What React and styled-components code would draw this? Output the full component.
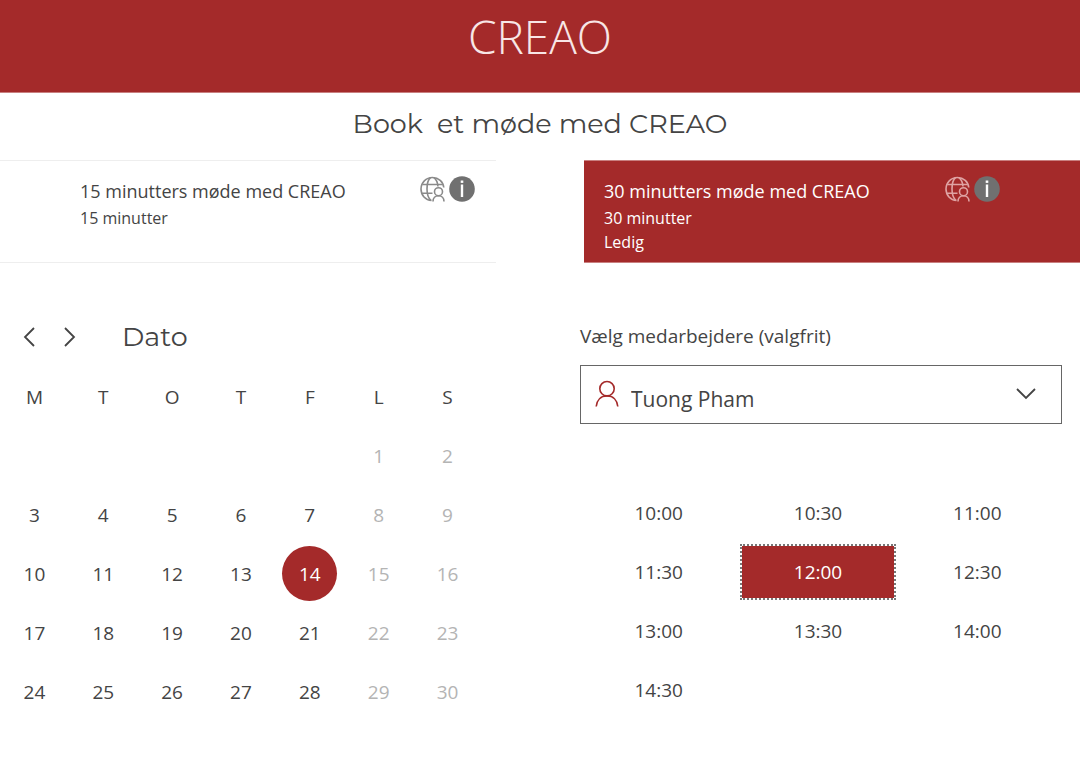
import { useState } from "react"
import styled, { createGlobalStyle } from "styled-components"

const GlobalStyle = createGlobalStyle`
  * {
    box-sizing: border-box;
  }

  body {
    margin: 0;
    background-color: white;
    color: #444;
    font-family: "Segoe UI", "Open Sans", "Noto Sans", sans-serif;
  }

  button, select {
    font-family: inherit;
    color: inherit;
  }
`

const Header = styled.header`
  height: 93px;
  background-color: #a42a2a;
  border-bottom: 1px solid #c98080;
  text-align: center;
`

const Brand = styled.h1`
  margin: 0;
  font-size: 46px;
  font-weight: 300;
  line-height: 72px;
  color: #f8e6e6;
`

const PageTitle = styled.h2`
  margin: 0;
  font-family: Montserrat, Inter, sans-serif;
  font-size: 27px;
  font-weight: 400;
  line-height: 62px;
  padding-bottom: 5px;
  text-align: center;
  white-space: pre-wrap;
`

const Services = styled.section`
  display: grid;
  grid-template-columns: 1fr 1fr;
  gap: 88px;
`

const ServiceCard = styled.button`
  display: flex;
  justify-content: space-between;
  align-items: flex-start;
  min-height: 102px;
  padding: ${props => props.$selected ? '15px 80px 8px 20px' : '15px 21px 8px 80px'};
  background-color: ${props => props.$selected ? '#a42a2a' : 'white'};
  color: ${props => props.$selected ? 'white' : '#444'};
  border: 0;
  border-top: 1px solid ${props => props.$selected ? '#c98080' : '#eee'};
  border-bottom: 1px solid ${props => props.$selected ? '#c98080' : '#eee'};
  text-align: left;
  cursor: pointer;
`

const ServiceText = styled.span`
  display: flex;
  flex-direction: column;
`

const ServiceName = styled.span`
  font-size: 18px;
  line-height: 30px;
`

const ServiceDetail = styled.span`
  font-size: 16px;
  line-height: 24px;
`

const ServiceIcons = styled.span`
  display: flex;
  gap: 4px;
  color: ${props => props.$selected ? '#dfa3a3' : '#8a8a8a'};
`

const Booking = styled.main`
  display: grid;
  grid-template-columns: 1fr 1fr;
  gap: 98px;
  padding: 44px 18px 48px 0;
`

const CalendarHeader = styled.div`
  display: flex;
  align-items: center;
  height: 60px;
  padding-left: 16px;
`

const ArrowButton = styled.button`
  display: flex;
  justify-content: center;
  width: 28px;
  margin-right: 12px;
  padding: 0;
  background: none;
  border: 0;
  cursor: pointer;
`

const CalendarTitle = styled.h3`
  margin: 0 0 0 26px;
  font-family: Montserrat, Inter, sans-serif;
  font-size: 27px;
  font-weight: 400;
  line-height: 62px;
`

const CalendarTable = styled.table`
  width: 100%;
  table-layout: fixed;
  border-collapse: collapse;

  th, td {
    height: 59px;
    padding: 0;
    font-size: 19px;
    font-weight: 400;
    text-align: center;
  }
`

const DayButton = styled.button`
  width: 55px;
  height: 55px;
  padding: 0;
  border: 0;
  border-radius: 50%;
  background-color: ${props => props.$selected ? '#a42a2a' : 'transparent'};
  color: ${props => props.$selected ? 'white' : '#444'};
  font-size: 19px;
  cursor: pointer;

  &:disabled {
    color: #b4b4b4;
    cursor: default;
  }
`

const StaffLabel = styled.label`
  display: block;
  font-size: 19px;
  line-height: 58px;
`

const StaffField = styled.div`
  position: relative;
  margin-bottom: 61px;
`

const StaffSelect = styled.select`
  display: block;
  width: 100%;
  height: 59px;
  padding: 8px 50px 0 50px;
  appearance: none;
  background-color: white;
  border: 1px solid #666;
  border-radius: 0;
  font-size: 21px;
`

const StaffIcon = styled.span`
  position: absolute;
  top: 15px;
  left: 15px;
  line-height: 0;
  pointer-events: none;
`

const SelectArrow = styled.span`
  position: absolute;
  top: 22px;
  right: 26px;
  line-height: 0;
  pointer-events: none;
`

const TimeGrid = styled.div`
  display: grid;
  grid-template-columns: repeat(3, 1fr);
  gap: 3px 4px;
  padding: 0 7px 0 1px;
`

const TimeButton = styled.button`
  height: 56px;
  padding: 0;
  background-color: ${props => props.$selected ? '#a42a2a' : 'transparent'};
  background-clip: padding-box;
  border: 2px dotted ${props => props.$selected ? '#777' : 'transparent'};
  color: ${props => props.$selected ? 'white' : '#444'};
  font-size: 19px;
  cursor: pointer;
`

function GlobePersonIcon() {
  return (
    <svg width="25" height="26" viewBox="0 0 25 26" fill="none" stroke="currentColor" strokeWidth="1.6">
      <path d="M23.800 11.500C23.300 5.600 18.500 1.500 12.500 1.500C6 1.500 1 6.600 1 13C1 19.300 5.500 24.300 11.500 24.500" />
      <path d="M10.500 1.700C8 3.800 7 8 7 13C7 18.200 8.600 22.400 11 24.500" />
      <path d="M14 1.700C16.300 3.500 17.600 6.500 18 10.500" />
      <path d="M2.500 8.500H22.800M2 17.200H12.500" />
      <circle cx="18.500" cy="15.700" r="4" />
      <path d="M13 25.500C13 22 15.300 19.700 18.500 19.700C21.700 19.700 24 22 24 25.500" />
    </svg>
  )
}

function InfoIcon() {
  return (
    <svg width="26" height="26" viewBox="0 0 26 26">
      <circle cx="13" cy="13" r="12.800" fill="#707070" />
      <rect x="11.800" y="8.500" width="2.400" height="12.500" fill="white" />
      <rect x="11.700" y="4.500" width="2.600" height="2.400" fill="white" />
    </svg>
  )
}

function PersonIcon() {
  return (
    <svg width="24" height="27" viewBox="0 0 24 27" fill="none" stroke="#a42a2a" strokeWidth="1.6">
      <circle cx="12" cy="8.700" r="7.200" />
      <path d="M1.200 26.500C1.800 20 6 15.900 12 15.900C18 15.900 22.200 20 22.800 26.500" />
    </svg>
  )
}

function Chevron({ width, height, d }) {
  return (
    <svg width={width} height={height} viewBox={`0 0 ${width} ${height}`} fill="none" stroke="#444" strokeWidth="1.8">
      <path d={d} />
    </svg>
  )
}

const services = [
  { name: '15 minutters møde med CREAO', details: ['15 minutter'] },
  { name: '30 minutters møde med CREAO', details: ['30 minutter', 'Ledig'] },
]

const weekdays = ['M', 'T', 'O', 'T', 'F', 'L', 'S']

const weeks = [
  [null, null, null, null, null, 1, 2],
  [3, 4, 5, 6, 7, 8, 9],
  [10, 11, 12, 13, 14, 15, 16],
  [17, 18, 19, 20, 21, 22, 23],
  [24, 25, 26, 27, 28, 29, 30],
]

const times = ['10:00', '10:30', '11:00', '11:30', '12:00', '12:30', '13:00', '13:30', '14:00', '14:30']

function Calendar() {
  const [day, setDay] = useState(14)

  return (
    <section>
      <CalendarHeader>
        <ArrowButton aria-label="Forrige måned"><Chevron width={14} height={20} d="M11 1L2 10L11 19" /></ArrowButton>
        <ArrowButton aria-label="Næste måned"><Chevron width={14} height={20} d="M2 1L11 10L2 19" /></ArrowButton>
        <CalendarTitle>Dato</CalendarTitle>
      </CalendarHeader>

      <CalendarTable>
        <thead>
          <tr>{weekdays.map((name, i) => <th key={i} scope="col">{name}</th>)}</tr>
        </thead>
        <tbody>
          {weeks.map((week, i) => (
            <tr key={i}>
              {week.map((date, j) => (
                <td key={j}>
                  {date && (
                    <DayButton $selected={date === day} disabled={j > 4} onClick={() => setDay(date)}>{date}</DayButton>
                  )}
                </td>
              ))}
            </tr>
          ))}
        </tbody>
      </CalendarTable>
    </section>
  )
}

function StaffAndTime() {
  const [time, setTime] = useState('12:00')

  return (
    <section>
      <StaffLabel htmlFor="staff">Vælg medarbejdere (valgfrit)</StaffLabel>
      <StaffField>
        <StaffSelect id="staff">
          <option>Tuong Pham</option>
        </StaffSelect>
        <StaffIcon><PersonIcon /></StaffIcon>
        <SelectArrow><Chevron width={20} height={14} d="M1 2L10 11L19 2" /></SelectArrow>
      </StaffField>

      <TimeGrid>
        {times.map(slot => (
          <TimeButton key={slot} $selected={slot === time} onClick={() => setTime(slot)}>{slot}</TimeButton>
        ))}
      </TimeGrid>
    </section>
  )
}

export default function App() {
  const [selected, setSelected] = useState(1)

  return (
    <>
      <GlobalStyle />
      <Header>
        <Brand>CREAO</Brand>
      </Header>
      <PageTitle>{'Book  et møde med CREAO'}</PageTitle>

      <Services>
        {services.map((service, i) => (
          <ServiceCard key={service.name} $selected={i === selected} onClick={() => setSelected(i)}>
            <ServiceText>
              <ServiceName>{service.name}</ServiceName>
              {service.details.map(detail => <ServiceDetail key={detail}>{detail}</ServiceDetail>)}
            </ServiceText>
            <ServiceIcons $selected={i === selected}>
              <GlobePersonIcon />
              <InfoIcon />
            </ServiceIcons>
          </ServiceCard>
        ))}
      </Services>

      <Booking>
        <Calendar />
        <StaffAndTime />
      </Booking>
    </>
  )
}
